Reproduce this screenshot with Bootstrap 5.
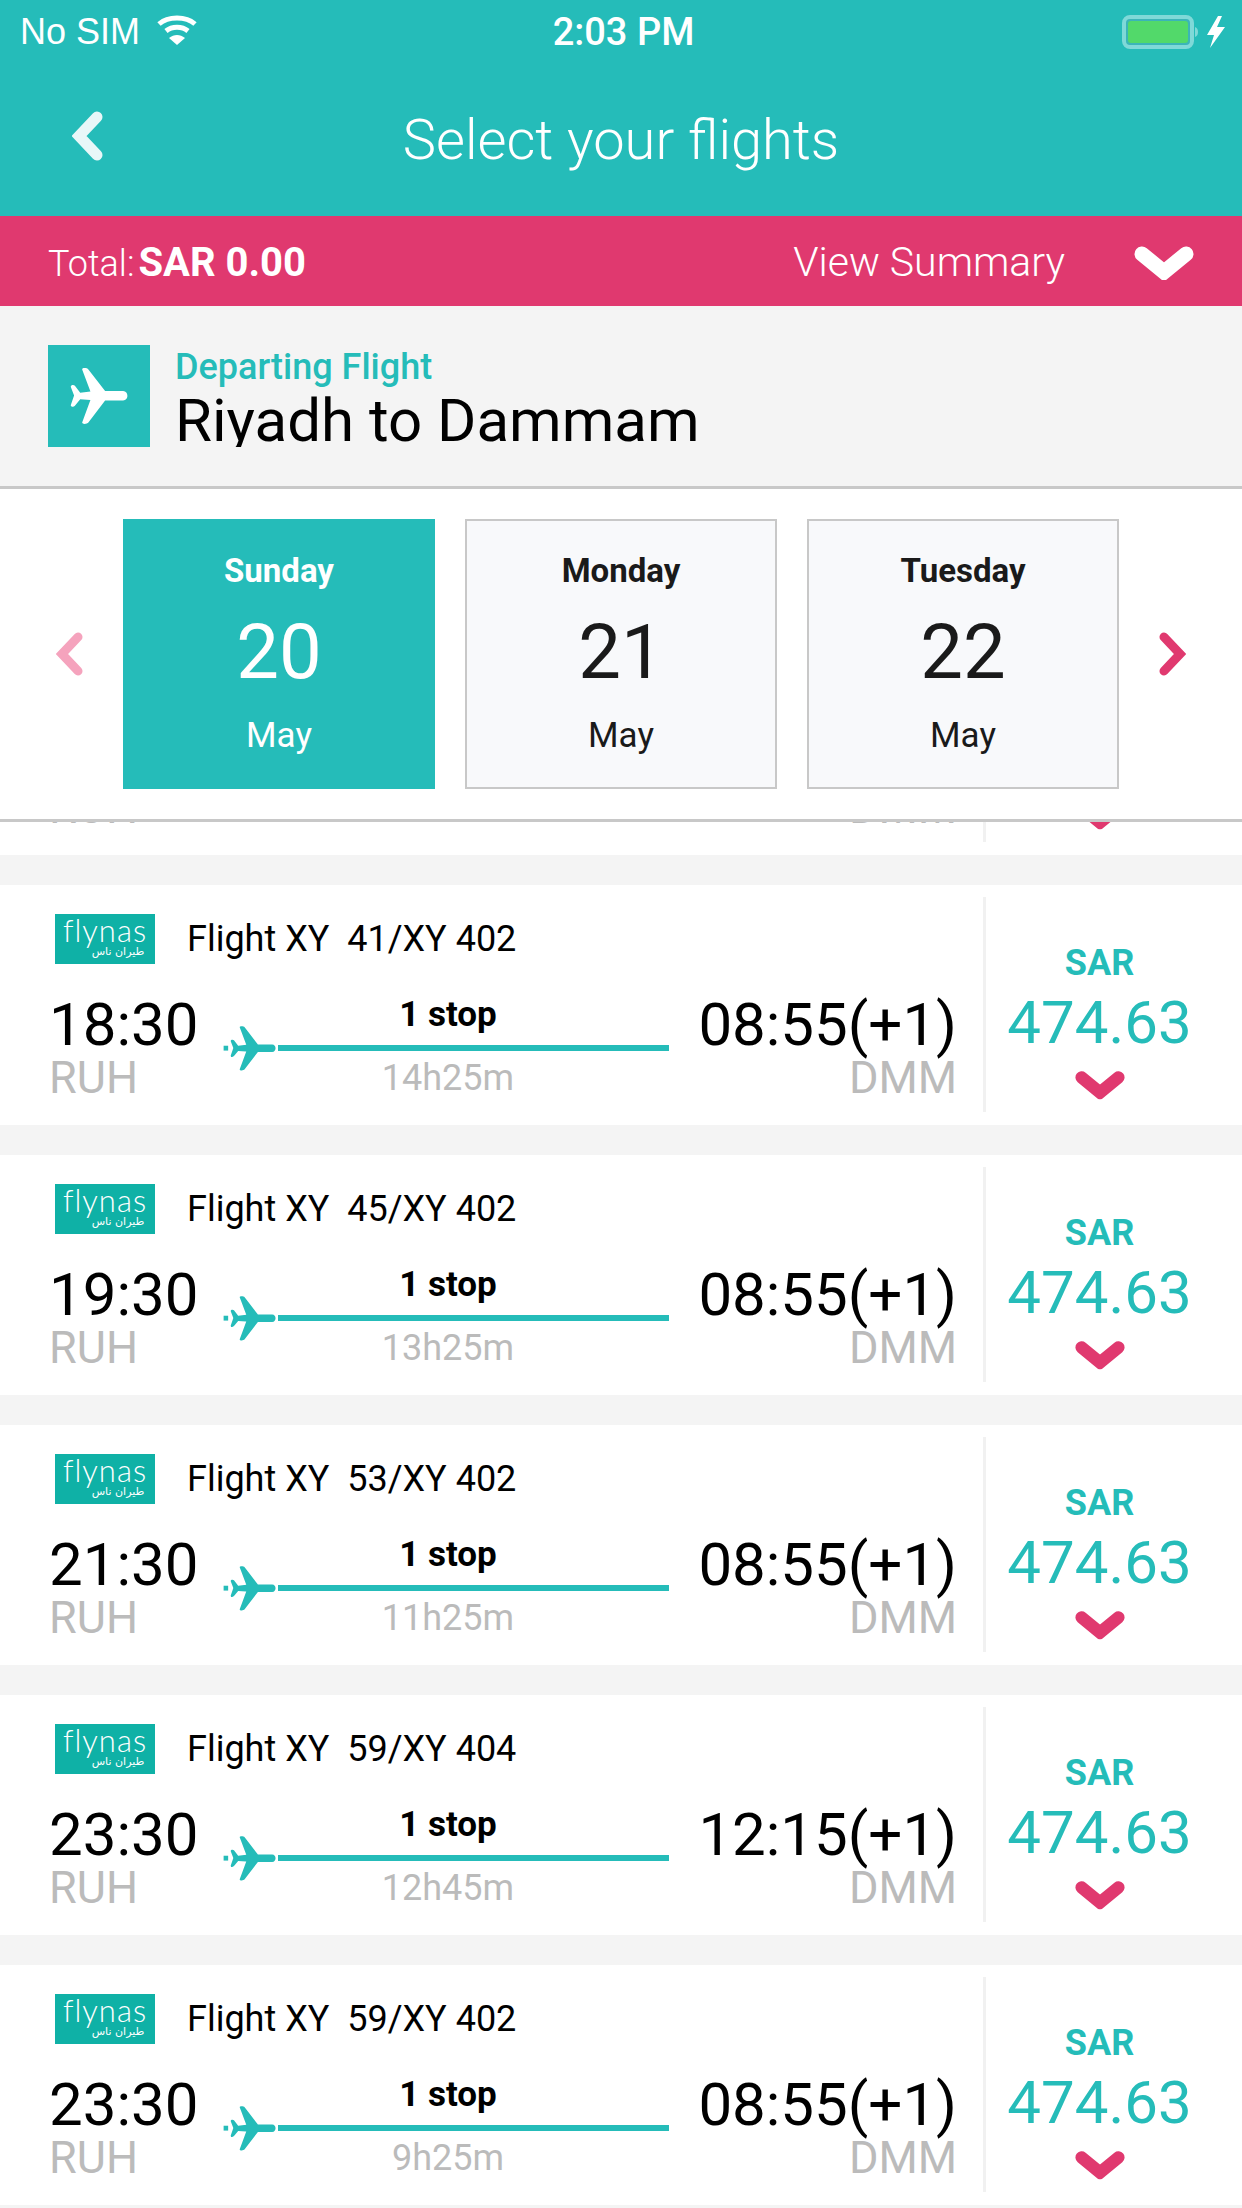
<!DOCTYPE html>
<html lang="en">
<head>
    <meta charset="UTF-8">
    <meta name="viewport" content="width=device-width, initial-scale=1.0">
    <title>Select your flights</title>
    <link rel="stylesheet" href="https://cdn.jsdelivr.net/npm/bootstrap@5.3.0/dist/css/bootstrap.min.css">
    <style>
        html, body { height: 100%; overflow: hidden; }
        body { background: #f4f4f4; font-family: Roboto, sans-serif; color: #000; }
        .app { height: 2208px; }
        .app > * { flex: none; }

        .top-bar { background: #25bcb9; height: 216px; color: #fff; }
        .status-row { height: 64px; padding: 0 15px 0 20px; font-family: "Liberation Sans", sans-serif; font-size: 36px; }
        .status-side { flex: 1 1 0; }
        .status-time { font-family: Roboto, sans-serif; font-weight: 500; font-size: 38px; }
        .title-row { height: 152px; }
        .title-side { width: 200px; padding-left: 72px; }
        .page-title { font-family: Roboto, sans-serif; font-weight: 300; font-size: 56px; margin: 0; line-height: 1; }

        .total-bar { background: #e0396f; height: 90px; color: #fff; padding: 4px 48px 0; }
        .total-label { font-weight: 300; font-size: 36px; }
        .total-val { font-size: 40px; }
        .total-summary { font-weight: 300; font-size: 41px; margin-right: 69px; }

        .route-bar { background: #f4f4f4; height: 183px; padding: 39px 48px 0; border-bottom: 3px solid #c8c8c8; }
        .route-icon { background: #25bcb9; width: 102px; height: 102px; flex: none; }
        .route-text { margin-left: 25px; height: 102px; overflow: hidden; }
        .route-kicker { color: #25bcb9; font-weight: 500; font-size: 36px; line-height: 44px; }
        .route-name { font-size: 60px; line-height: 64px; }

        .date-bar { background: #fff; height: 333px; padding: 30px 0 0; border-bottom: 3px solid #c8c8c8; }
        .date-arrow { width: 123px; height: 270px; flex: none; }
        .arrow-prev { padding-right: 39px; }
        .arrow-next { padding-left: 39px; }
        .date-tile { width: 312px; height: 270px; flex: none; background: #f8f9fb; border: 2px solid #c8c8c8; color: #1a1a1a; margin-right: 30px; }
        .date-tile.is-last { margin-right: 0; }
        .date-tile.is-active { background: #25bcb9; border-color: #25bcb9; color: #fff; }
        .date-day { font-size: 33px; font-weight: 700; line-height: 40px; margin-top: 30px; }
        .date-num { font-size: 76px; font-weight: 400; line-height: 80px; margin-top: 21px; }
        .date-month { font-size: 35px; line-height: 40px; margin-top: 24px; }

        .app > .flight-list { flex: 1 1 0; min-height: 0; overflow: hidden; }
        .flight-list .flight-item:first-child { margin-top: -207px; }
        .flight-item { background: #fff; height: 240px; margin-bottom: 30px; }
        .flight-main { width: 983px; flex: none; padding: 29px 0 0 49px; }
        .flight-logo { width: 100px; height: 50px; margin-left: 6px; background: #0fb1a6; color: #fff; flex: none; text-align: center; padding-top: 3px; }
        .logo-en { font-family: Lato, sans-serif; font-size: 31px; line-height: 26px; letter-spacing: 1px; font-weight: 300; height: 28px; }
        .logo-ar { font-family: "DejaVu Sans", sans-serif; font-size: 11px; line-height: 14px; padding-left: 26px; }
        .flight-no { font-size: 36px; margin-left: 32px; line-height: 50px; white-space: pre; }
        .flight-times { margin-top: 32px; }
        .dep-col { width: 173px; flex: none; }
        .big-time { font-size: 60px; line-height: 58px; }
        .airport { color: #bbb; font-size: 45px; line-height: 44px; margin-top: 2px; }
        .mid-col { width: 452px; flex: none; text-align: center; }
        .stop-label { font-size: 35px; font-weight: 700; line-height: 38px; }
        .route-line { height: 52px; margin-top: -12px; padding-right: 5px; }
        .route-stroke { height: 6px; background: #25bcb9; flex: 1 1 auto; margin-left: 1px; }
        .duration { color: #bbb; font-size: 36px; line-height: 38px; margin-top: -15px; }
        .arr-col { width: 283px; flex: none; text-align: right; white-space: nowrap; }
        .flight-price { width: 256px; flex: none; margin: 12px 0 13px; border-left: 3px solid #f1f1f1; color: #25bcb9; padding: 46px 26px 0 0; }
        .price-cur { font-size: 36px; font-weight: 700; line-height: 40px; }
        .price-val { font-size: 60px; line-height: 58px; margin-top: 11px; }
        .price-arrow { display: block; margin: 18px auto 0; }
    </style>
</head>
<body>
    <svg width="0" height="0" class="d-block">
        <symbol id="plane" viewBox="85 40 142 142">
            <path d="M215 99H171L130 46C127 42 113 41 115 47L135 100L110 103L97 86C94 83 86 84 87 89L95 110L87 133C86 138 94 139 97 135L110 119L135 121L115 175C113 181 127 180 130 176L171 122H215C229 122 229 99 215 99Z"/>
        </symbol>
        <symbol id="chev-down" viewBox="0 0 60 34">
            <path d="M8 8L30 26L52 8" fill="none" stroke="currentColor" stroke-width="15" stroke-linecap="round" stroke-linejoin="miter"/>
        </symbol>
    </svg>

    <div class="app d-flex flex-column">
        <header class="top-bar">
            <div class="status-row d-flex align-items-center">
                <div class="status-side d-flex align-items-center">
                    <span>No SIM</span>
                    <svg width="42" height="30" viewBox="0 0 42 30" fill="none" stroke="#fff" class="ms-3 mb-1">
                        <path d="M3 9C12 1 30 1 39 9" stroke-width="5"/>
                        <path d="M10 16C16 11 26 11 32 16" stroke-width="5"/>
                        <path d="M13 23C18 19 24 19 29 23L21 30Z" fill="#fff" stroke="none"/>
                    </svg>
                </div>
                <div class="status-time">2:03 PM</div>
                <div class="status-side d-flex align-items-center justify-content-end">
                    <svg width="105" height="34" viewBox="0 0 105 34">
                        <rect x="2" y="2" width="68" height="30" rx="6" fill="#3bb5b8" stroke="#7fd9d8" stroke-width="4"/>
                        <rect x="6" y="6" width="60" height="22" rx="3" fill="#52d96a"/>
                        <path d="M73 12C77 13 77 21 73 22Z" fill="#7fd9d8"/>
                        <path d="M97 1L86 20H93L89 33L104 12H96L101 1Z" fill="#fff" transform="translate(-1 0)"/>
                    </svg>
                </div>
            </div>
            <div class="title-row d-flex align-items-center">
                <div class="title-side">
                    <svg width="32" height="50" viewBox="0 0 32 50" fill="none" stroke="#e8f7f8" stroke-width="11" stroke-linecap="round" class="d-block mb-2">
                        <path d="M25 6L7 25L25 44"/>
                    </svg>
                </div>
                <h1 class="page-title flex-grow-1 text-center">Select your flights</h1>
                <div class="title-side"></div>
            </div>
        </header>

        <div class="total-bar d-flex align-items-center">
            <div class="flex-grow-1"><span class="total-label">Total:</span> <span class="fw-bold total-val">SAR 0.00</span></div>
            <div class="total-summary">View Summary</div>
            <svg width="60" height="34" class="text-white"><use href="#chev-down"/></svg>
        </div>

        <div class="route-bar d-flex align-items-start">
            <div class="route-icon d-flex align-items-center justify-content-center">
                <svg width="58" height="58" fill="#fff"><use href="#plane"/></svg>
            </div>
            <div class="route-text">
                <div class="route-kicker">Departing Flight</div>
                <div class="route-name">Riyadh to Dammam</div>
            </div>
        </div>

        <div class="date-bar d-flex align-items-start">
            <div class="date-arrow arrow-prev d-flex align-items-center justify-content-end">
                <svg width="28" height="44" viewBox="0 0 28 44" fill="none" stroke="#f5a3bd" stroke-width="9" stroke-linecap="round"><path d="M22 5L6 22L22 39"/></svg>
            </div>
            <div class="date-tile is-active text-center">
                <div class="date-day">Sunday</div><div class="date-num">20</div><div class="date-month">May</div>
            </div>
            <div class="date-tile text-center">
                <div class="date-day">Monday</div><div class="date-num">21</div><div class="date-month">May</div>
            </div>
            <div class="date-tile is-last text-center">
                <div class="date-day">Tuesday</div><div class="date-num">22</div><div class="date-month">May</div>
            </div>
            <div class="date-arrow arrow-next d-flex align-items-center">
                <svg width="28" height="44" viewBox="0 0 28 44" fill="none" stroke="#e0396f" stroke-width="9" stroke-linecap="round"><path d="M6 5L22 22L6 39"/></svg>
            </div>
        </div>

        <div id="flights" class="flight-list"></div>
    </div>

    <script src="https://cdn.jsdelivr.net/npm/bootstrap@5.3.0/dist/js/bootstrap.bundle.min.js"></script>
    <script>
        const voos = [
            { no: "XY  37/XY 402", dep: "17:30", arr: "08:55(+1)", dur: "15h25m" },
            { no: "XY  41/XY 402", dep: "18:30", arr: "08:55(+1)", dur: "14h25m" },
            { no: "XY  45/XY 402", dep: "19:30", arr: "08:55(+1)", dur: "13h25m" },
            { no: "XY  53/XY 402", dep: "21:30", arr: "08:55(+1)", dur: "11h25m" },
            { no: "XY  59/XY 404", dep: "23:30", arr: "12:15(+1)", dur: "12h45m" },
            { no: "XY  59/XY 402", dep: "23:30", arr: "08:55(+1)", dur: "9h25m" }
        ];

        const lista = document.getElementById("flights");
        voos.forEach(voo => {
            const item = document.createElement("div");
            item.className = "flight-item d-flex";
            item.innerHTML = `
                <div class="flight-main">
                    <div class="d-flex align-items-center">
                        <div class="flight-logo">
                            <div class="logo-en">flynas</div>
                            <div class="logo-ar">طيران ناس</div>
                        </div>
                        <div class="flight-no">Flight ${voo.no}</div>
                    </div>
                    <div class="flight-times d-flex">
                        <div class="dep-col">
                            <div class="big-time">${voo.dep}</div>
                            <div class="airport">RUH</div>
                        </div>
                        <div class="mid-col">
                            <div class="stop-label">1 stop</div>
                            <div class="route-line d-flex align-items-center">
                                <svg width="55" height="52" viewBox="60 30 170 160" fill="#25bcb9">
                                    <rect x="65" y="103" width="14" height="15"/>
                                    <use href="#plane" x="85" y="40" width="142" height="142"/>
                                </svg>
                                <div class="route-stroke"></div>
                            </div>
                            <div class="duration">${voo.dur}</div>
                        </div>
                        <div class="arr-col">
                            <div class="big-time">${voo.arr}</div>
                            <div class="airport">DMM</div>
                        </div>
                    </div>
                </div>
                <div class="flight-price text-center">
                    <div class="price-cur">SAR</div>
                    <div class="price-val">474.63</div>
                    <svg class="price-arrow" width="50" height="30" viewBox="0 0 60 34" color="#e0396f"><use href="#chev-down"/></svg>
                </div>`;
            lista.appendChild(item);
        });
    </script>
</body>
</html>
